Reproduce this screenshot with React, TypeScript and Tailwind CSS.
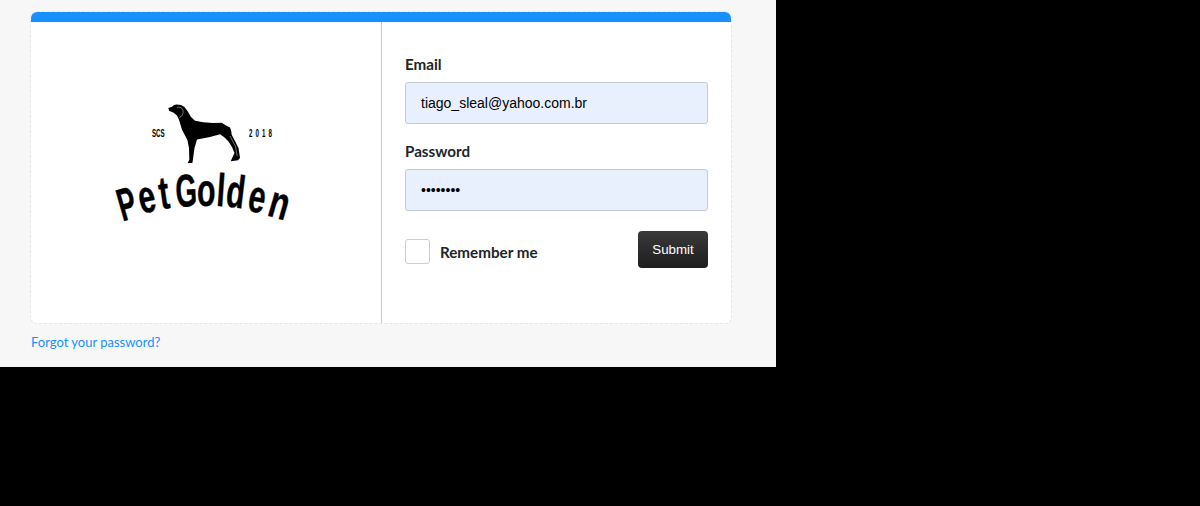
const letters: [string, number, number, number, number][] = [
  ["P", 131, 219, -16, 0.58],
  ["e", 149.5, 212, -11.5, 0.66],
  ["t", 166, 208.5, -8, 0.66],
  ["G", 187, 206.5, -3, 0.6],
  ["o", 206, 206, 1, 0.66],
  ["l", 220, 206, 4, 0.66],
  ["d", 234, 207.5, 7, 0.66],
  ["e", 254.5, 212, 11, 0.66],
  ["n", 275.5, 218, 16, 0.7],
];

const NARROW = "'Liberation Sans',sans-serif";

function Logo() {
  return (
    <svg width="350" height="301" viewBox="31 22 350 301" className="block">
      <path
        fill="#000"
        d="M168.3 108L172 106.8L174 105L176.7 104.5L181 105L184.5 107L187.5 111L191 117L195 120.7L203.3 122.3L213 123L221.7 122.7L226 125.5L230 127.5L231.2 131L231.7 134.7L235 141L238.5 148L240 158L238 160.3L230.7 161.3L231.7 159L234.5 153L232 147L228.3 141.3L224 137L220 134.2L210 137L197 139.5L194.5 148L192.7 161.3L192.3 163L187.7 163L189.3 159.7L189 148L187.3 139.7L182 129.7L179 119.7L177 115.5L173.3 112.5L169.3 111Z"
      />
      <path fill="none" stroke="#fff" strokeWidth="0.45" d="M177 107.5C179 106.5 182 107.5 183 110C183.8 113.5 182 116.5 179.5 117.5 M230 136L235.5 146.5L237.2 156" />
      <text transform="translate(152 137) scale(0.62 1)" fontSize="10" fontWeight="700" fontFamily={NARROW} fill="#000">SCS</text>
      <text transform="translate(249 137) scale(0.62 1)" fontSize="10" fontWeight="700" fontFamily={NARROW} fill="#000" letterSpacing="5">2018</text>
      {letters.map(([c, x, y, r, s], i) => (
        <text
          key={i}
          transform={`translate(${x} ${y}) rotate(${r}) scale(${s} 1)`}
          textAnchor="middle"
          fontSize="46"
          fontWeight="700"
          fontFamily={NARROW}
          fill="#000"
          stroke="#000"
          strokeWidth="0.4"
        >
          {c}
        </text>
      ))}
    </svg>
  );
}

export default function App() {
  return (
    <div className="h-[506px] overflow-hidden bg-black">
      <div className="flex h-[367px] w-[776px] flex-col items-start bg-[#f7f7f7] pl-[31px] pt-3">
        <div className="w-[700px] overflow-hidden rounded-[6px] bg-white outline outline-1 outline-dashed outline-[#e6e6e6]">
          <div className="h-[10px] bg-[#1890ff]" />
          <div className="flex h-[301px]">
            <div className="w-[350px] shrink-0 border-r border-[#c9c9c9] box-content">
              <Logo />
            </div>
            <form className="flex flex-1 flex-col px-[23px] pt-[33px] font-['Lato',sans-serif]">
              <label className="text-[15.2px] font-bold leading-[18px] text-[#212529]">Email</label>
              <div className="mt-[9px] flex h-[42px] w-[303px] items-center rounded-[3px] border border-[#c5c9d2] bg-[#e8f0fe] pl-[15px] pt-[1px] font-['Liberation_Sans',sans-serif] text-[14px] text-black">
                tiago_sleal@yahoo.com.br
              </div>
              <label className="mt-[18px] text-[15.2px] font-bold leading-[18px] text-[#212529]">Password</label>
              <div className="mt-[9px] flex h-[42px] w-[303px] items-center rounded-[3px] border border-[#c5c9d2] bg-[#e8f0fe] pl-[15px] pt-[1px] font-['Liberation_Sans',sans-serif] text-[14px] text-black">
                ••••••••
              </div>
              <div className="mt-5 flex w-[303px] items-start justify-between">
                <div className="mt-2 flex items-center gap-[10px]">
                  <span className="h-[25px] w-[25px] rounded-[3px] border border-[#cccccc] bg-white" />
                  <span className="mt-[2px] text-[15.2px] font-bold text-[#212529]">Remember me</span>
                </div>
                <button
                  type="button"
                  className="h-[37px] w-[70px] rounded-[4px] bg-gradient-to-b from-[#3a3a3a] to-[#1e1e1e] font-['Liberation_Sans',sans-serif] text-[13.33px] text-white"
                >
                  Submit
                </button>
              </div>
            </form>
          </div>
        </div>
        <a className="mt-[11px] font-['Lato',sans-serif] text-[13px] leading-[17px] text-[#1890ff]">Forgot your password?</a>
      </div>
    </div>
  );
}
